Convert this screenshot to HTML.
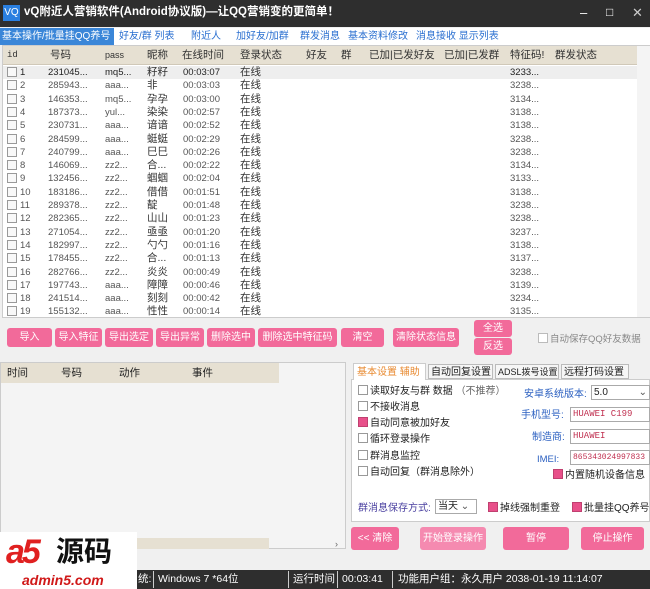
<!DOCTYPE html>
<html><head><meta charset="utf-8">
<style>
*{margin:0;padding:0;box-sizing:border-box}
body{width:650px;height:589px;overflow:hidden;background:#f0f0f0;font-family:"Liberation Sans","Noto Sans CJK SC",sans-serif;font-size:10.5px;line-height:13px;color:#222;position:relative}
.a{position:absolute;white-space:nowrap}
.title{left:0;top:0;width:650px;height:27px;background:#2e2e2e;color:#fff}
.tabs{top:28px;left:0;height:17px;width:650px;background:#fff}
.tab{position:absolute;top:0;height:17px;line-height:17px;color:#2a6fd0;font-size:10px;padding:0 2px;overflow:hidden}
.grid{left:2px;top:45px;width:648px;height:273px;background:#fff;border:1px solid #ccc}
.hdr{position:absolute;left:0;top:0;width:634px;height:19px;background:#e6e0d2;border-bottom:1px solid #d0c8b8}
.h{position:absolute;top:3px;font-size:10.5px;line-height:13px;color:#333}
.row{position:absolute;left:0;width:634px;height:13px;font-size:9.5px;color:#555;line-height:13px}
.row span{position:absolute}
.cb{position:absolute;width:10px;height:10px;border:1px solid #999;background:#f8f8f8;top:1px;left:4px}
.btn{position:absolute;background:#f26a9a;color:#fff;font-size:10px;text-align:center;border-radius:3px;height:19px;line-height:19px;top:328px;overflow:hidden}
.lbl{color:#2a5fc0;font-size:10px}
.inp{position:absolute;background:#fff;border:1px solid #aaa;color:#c03050;font-family:"Liberation Mono",monospace;font-size:9px;height:15px;line-height:13px;padding-left:2px;overflow:hidden}
.ck{display:inline-block;width:10px;height:10px;border:1px solid #999;background:#fff;vertical-align:-1px;margin-right:2px}
.ck.on{background:#e8508a;border-color:#c04070}
.p{font-size:10px}
.sb{top:570px;left:0;width:650px;height:19px;background:#2e2e2e;color:#fff;font-size:10.5px}
.sb span{line-height:13px}
</style></head><body>
<div class="a title">
 <div class="a" style="left:3px;top:5px;width:17px;height:16px;background:#2a7fe0;color:#fff;font-size:10px;line-height:16px;text-align:center">VQ</div>
 <div class="a" style="left:24px;top:6px;font-size:11.5px;font-weight:bold">vQ附近人营销软件(Android协议版)—让QQ营销变的更简单！</div>
 <div class="a" style="left:580px;top:6px;font-size:13px">–</div>
 <div class="a" style="left:606px;top:6px;font-size:12px">□</div>
 <div class="a" style="left:632px;top:6px;font-size:13px;color:#ccc">✕</div>
</div>
<div class="a tabs">
 <div class="tab" style="left:0;width:114px;background:#3a86d8;color:#fff">基本操作/批量挂QQ养号</div>
 <div class="tab" style="left:117px">好友/群 列表</div>
 <div class="tab" style="left:189px">附近人</div>
 <div class="tab" style="left:234px">加好友/加群</div>
 <div class="tab" style="left:298px">群发消息</div>
 <div class="tab" style="left:346px">基本资料修改</div>
 <div class="tab" style="left:414px">消息接收 显示列表</div>
</div>
<div class="a grid">
 <div class="hdr">
  <span class="h" style="left:4px;font-family:'Liberation Mono';font-size:9px">id</span>
  <span class="h" style="left:47px">号码</span>
  <span class="h" style="left:102px;font-size:9px">pass</span>
  <span class="h" style="left:144px">昵称</span>
  <span class="h" style="left:179px">在线时间</span>
  <span class="h" style="left:237px">登录状态</span>
  <span class="h" style="left:303px">好友</span>
  <span class="h" style="left:338px">群</span>
  <span class="h" style="left:366px">已加|已发好友</span>
  <span class="h" style="left:441px">已加|已发群</span>
  <span class="h" style="left:507px">特征码!</span>
  <span class="h" style="left:552px">群发状态</span>
 </div>
 <div class="a" style="left:634px;top:0;width:13px;height:271px;background:#f4f4f4"></div>
 <div id="rows"></div>
</div>
<script>
var d=[["231045","mq5","籽籽","00:03:07","3233"],["285943","aaa","非","00:03:03","3238"],["146353","mq5","孕孕","00:03:00","3134"],["187373","yul","染染","00:02:57","3138"],["230731","aaa","谙谙","00:02:52","3138"],["284599","aaa","蜓蜓","00:02:29","3238"],["240799","aaa","巳巳","00:02:26","3238"],["146069","zz2","合...","00:02:22","3134"],["132456","zz2","蝈蝈","00:02:04","3133"],["183186","zz2","借借","00:01:51","3138"],["289378","zz2","靛","00:01:48","3238"],["282365","zz2","山山","00:01:23","3238"],["271054","zz2","亟亟","00:01:20","3237"],["182997","zz2","勺勺","00:01:16","3138"],["178455","zz2","合...","00:01:13","3137"],["282766","zz2","炎炎","00:00:49","3238"],["197743","aaa","障障","00:00:46","3139"],["241514","aaa","刻刻","00:00:42","3234"],["155132","aaa","性性","00:00:14","3135"]];
var h="";for(var i=0;i<d.length;i++){var r=d[i];h+='<div class="row" style="top:'+(20+i*13.3)+'px;'+(i==0?'background:#eeeeee;color:#222':'')+'"><div class="cb"></div><span style="left:17px">'+(i+1)+'</span><span style="left:45px">'+r[0]+'...</span><span style="left:102px">'+r[1]+'...</span><span style="left:144px;font-size:10.5px;color:#333">'+r[2]+'</span><span style="left:180px">'+r[3]+'</span><span style="left:237px;font-size:10.5px;color:#333">在线</span><span style="left:507px">'+r[4]+'...</span></div>';}
document.getElementById("rows").innerHTML=h;
</script>
<div class="btn" style="left:7px;width:45px">导入</div>
<div class="btn" style="left:55px;width:47px">导入特征</div>
<div class="btn" style="left:105px;width:48px">导出选定</div>
<div class="btn" style="left:156px;width:48px">导出异常</div>
<div class="btn" style="left:207px;width:48px">删除选中</div>
<div class="btn" style="left:258px;width:79px">删除选中特征码</div>
<div class="btn" style="left:341px;width:43px">清空</div>
<div class="btn" style="left:393px;width:66px">清除状态信息</div>
<div class="btn" style="left:474px;width:38px;top:320px;height:17px;line-height:17px">全选</div>
<div class="btn" style="left:474px;width:38px;top:338px;height:17px;line-height:17px">反选</div>
<div class="a" style="left:538px;top:333px;color:#888;font-size:9.5px"><span class="ck" style="border-color:#bbb"></span>自动保存QQ好友数据</div>
<div class="a" style="left:0;top:362px;width:346px;height:187px;background:#f4f4f4;border:1px solid #ccc">
 <div class="a" style="left:0;top:0;width:278px;height:20px;background:#e6e0d2"></div>
 <span class="a" style="left:6px;top:4px">时间</span><span class="a" style="left:60px;top:4px">号码</span><span class="a" style="left:118px;top:4px">动作</span><span class="a" style="left:191px;top:4px">事件</span>
 <div class="a" style="left:130px;top:175px;width:138px;height:11px;background:#e6e0d2"></div>
 <div class="a" style="left:334px;top:175px;font-size:9px;color:#666">›</div>
</div>
<div class="a" style="left:351px;top:379px;width:299px;height:143px;background:#fff;border:1px solid #ccc"></div>
<div class="a p" style="left:353px;top:363px;width:73px;height:17px;background:#fff;color:#e88a30;padding:2px 3px;border:1px solid #ccc;border-bottom:none">基本设置 辅助</div>
<div class="a p" style="left:428px;top:364px;width:65px;height:15px;padding:1px 2px;border:1px solid #bbb;background:#f6f6f6;overflow:hidden">自动回复设置</div>
<div class="a" style="left:495px;top:364px;width:64px;height:15px;padding:1px 2px;border:1px solid #bbb;background:#f6f6f6;font-size:9px;overflow:hidden">ADSL拨号设置</div>
<div class="a p" style="left:561px;top:364px;width:68px;height:15px;padding:1px 2px;border:1px solid #bbb;background:#f6f6f6;overflow:hidden">远程打码设置</div>
<div class="a p" style="left:358px;top:385px"><span class="ck"></span>读取好友与群 数据 <span style="color:#666">（不推荐）</span></div>
<div class="a p" style="left:358px;top:401px"><span class="ck"></span>不接收消息</div>
<div class="a p" style="left:358px;top:417px"><span class="ck on"></span>自动同意被加好友</div>
<div class="a p" style="left:358px;top:433px"><span class="ck"></span>循环登录操作</div>
<div class="a p" style="left:358px;top:450px"><span class="ck"></span>群消息监控</div>
<div class="a p" style="left:358px;top:466px"><span class="ck"></span>自动回复（群消息除外）</div>
<div class="a lbl" style="left:524px;top:388px">安卓系统版本:</div>
<div class="inp" style="left:591px;top:385px;width:59px;color:#222;font-family:'Liberation Sans';font-size:10px">5.0<span style="position:absolute;right:2px;top:0;color:#555">⌄</span></div>
<div class="a lbl" style="left:521px;top:409px">手机型号:</div>
<div class="inp" style="left:570px;top:407px;width:80px">HUAWEI C199</div>
<div class="a lbl" style="left:532px;top:431px">制造商:</div>
<div class="inp" style="left:570px;top:429px;width:80px">HUAWEI</div>
<div class="a lbl" style="left:537px;top:453px;font-size:9.5px">IMEI:</div>
<div class="inp" style="left:570px;top:450px;width:80px;font-size:8px">865343024997833</div>
<div class="a p" style="left:553px;top:469px"><span class="ck on"></span>内置随机设备信息</div>
<div class="a" style="left:358px;top:502px;color:#4a40a0;font-size:10px">群消息保存方式:</div>
<div class="inp" style="left:435px;top:499px;width:42px;color:#222;font-family:'Liberation Sans';font-size:10px">当天 <span style="color:#555">⌄</span></div>
<div class="a p" style="left:488px;top:502px"><span class="ck on"></span>掉线强制重登</div>
<div class="a p" style="left:572px;top:502px"><span class="ck on"></span>批量挂QQ养号</div>
<div class="btn" style="left:351px;top:527px;width:48px;height:23px;line-height:23px">&lt;&lt; 清除</div>
<div class="btn" style="left:420px;top:527px;width:66px;height:23px;line-height:23px;background:#f58ab0">开始登录操作</div>
<div class="btn" style="left:503px;top:527px;width:66px;height:23px;line-height:23px">暂停</div>
<div class="btn" style="left:581px;top:527px;width:63px;height:23px;line-height:23px">停止操作</div>
<div class="a sb">
 <span class="a" style="left:138px;top:3px">统:</span>
 <span class="a" style="left:153px;top:1px;width:1px;height:17px;background:#ccc"></span>
 <span class="a" style="left:158px;top:3px">Windows 7 *64位</span>
 <span class="a" style="left:288px;top:1px;width:1px;height:17px;background:#ccc"></span>
 <span class="a" style="left:293px;top:3px">运行时间</span>
 <span class="a" style="left:337px;top:1px;width:1px;height:17px;background:#ccc"></span>
 <span class="a" style="left:342px;top:3px">00:03:41</span>
 <span class="a" style="left:392px;top:1px;width:1px;height:17px;background:#ccc"></span>
 <span class="a" style="left:398px;top:3px">功能用户组：永久用户 2038-01-19 11:14:07</span>
</div>
<div class="a" style="left:0;top:532px;width:137px;height:57px;background:#fff">
 <div class="a" style="left:6px;top:2px;font-size:34px;line-height:36px;font-weight:bold;font-style:italic;color:#e02020;letter-spacing:-3px">a5</div>
 <div class="a" style="left:56px;top:4px;font-size:28px;line-height:32px;font-weight:bold;color:#111">源码</div>
 <div class="a" style="left:22px;top:40px;font-size:14px;line-height:16px;font-weight:bold;font-style:italic;color:#d01818">admin5.com</div>
</div>
</body></html>
